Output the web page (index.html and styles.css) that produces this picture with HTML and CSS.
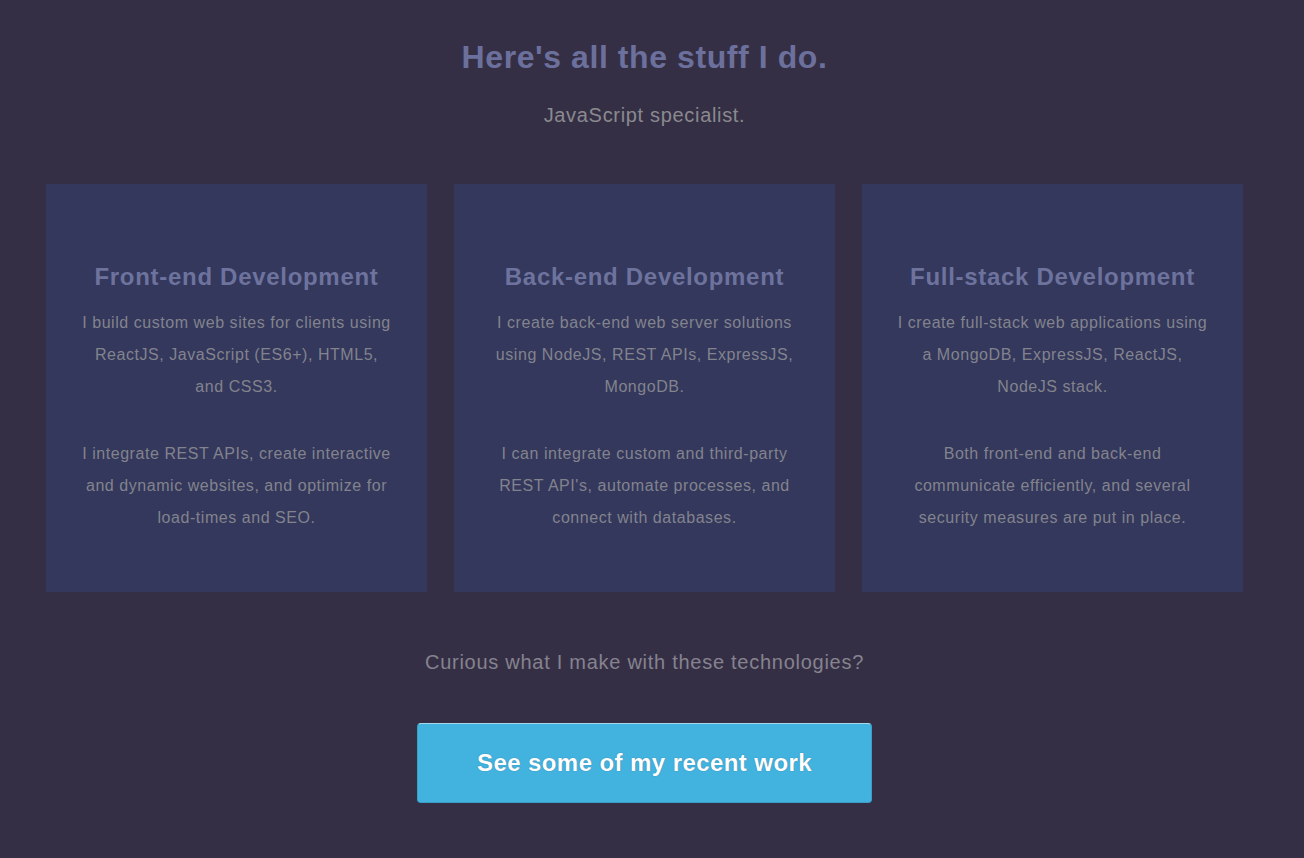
FILE: index.html
```html
<!DOCTYPE html>
<html lang="en">
<head>
<meta charset="utf-8">
<title>Services</title>
<link rel="stylesheet" href="styles.css">
</head>
<body>
<section class="services">
  <h1 class="title">Here's all the stuff I do.</h1>
  <p class="subtitle">JavaScript specialist.</p>
  <div class="cards">
    <div class="card">
      <h2 class="card-title">Front-end Development</h2>
      <p class="card-text">I build custom web sites for clients using ReactJS, JavaScript (ES6+), HTML5, and CSS3.</p>
      <p class="card-text">I integrate REST APIs, create interactive and dynamic websites, and optimize for load-times and SEO.</p>
    </div>
    <div class="card">
      <h2 class="card-title">Back-end Development</h2>
      <p class="card-text">I create back-end web server solutions using NodeJS, REST APIs, ExpressJS, MongoDB.</p>
      <p class="card-text">I can integrate custom and third-party REST API's, automate processes, and connect with databases.</p>
    </div>
    <div class="card">
      <h2 class="card-title">Full-stack Development</h2>
      <p class="card-text">I create full-stack web applications using a MongoDB, ExpressJS, ReactJS, NodeJS stack.</p>
      <p class="card-text">Both front-end and back-end communicate efficiently, and several security measures are put in place.</p>
    </div>
  </div>
  <p class="curious">Curious what I make with these technologies?</p>
  <a class="cta" href="#">See some of my recent work</a>
</section>
</body>
</html>
```

FILE: styles.css
```css
html, body {
  margin: 0;
  padding: 0;
  background: #352f46;
}
body {
  font-family: "Liberation Sans", Arial, sans-serif;
  width: 1289px;
}
.services {
  display: flex;
  flex-direction: column;
  align-items: center;
  padding-top: 38px;
}
.title {
  margin: 0;
  font-size: 32px;
  line-height: 38px;
  font-weight: bold;
  letter-spacing: 0.58px;
  color: #6c709c;
}
.subtitle {
  margin: 27px 0 0;
  font-size: 20px;
  line-height: 24px;
  letter-spacing: 0.68px;
  color: #8a8a8e;
}
.cards {
  margin-top: 57px;
  display: flex;
  gap: 27px;
}
.card {
  width: 381px;
  height: 408px;
  box-sizing: border-box;
  background: #33385c;
  padding: 78px 34px 0;
  text-align: center;
}
.card-title {
  margin: 0 0 15px;
  font-size: 24px;
  line-height: 30px;
  font-weight: bold;
  letter-spacing: 0.7px;
  color: #6e739e;
}
.card-text {
  margin: 0 0 35px;
  font-size: 16px;
  line-height: 32px;
  letter-spacing: 0.55px;
  color: #83838d;
}
.curious {
  margin: 58px 0 0;
  font-size: 20px;
  line-height: 24px;
  letter-spacing: 0.73px;
  color: #85838e;
}
.cta {
  margin-top: 49px;
  width: 455px;
  height: 80px;
  box-sizing: border-box;
  display: flex;
  align-items: center;
  justify-content: center;
  background: #42b2df;
  border: 1px solid #3a9fc8;
  border-top-color: #a6d8ec;
  border-radius: 4px;
  color: #ffffff;
  font-size: 24px;
  font-weight: bold;
  letter-spacing: 0.42px;
  text-decoration: none;
  text-shadow: 0 0 1px #2a6f8c;
}
```
